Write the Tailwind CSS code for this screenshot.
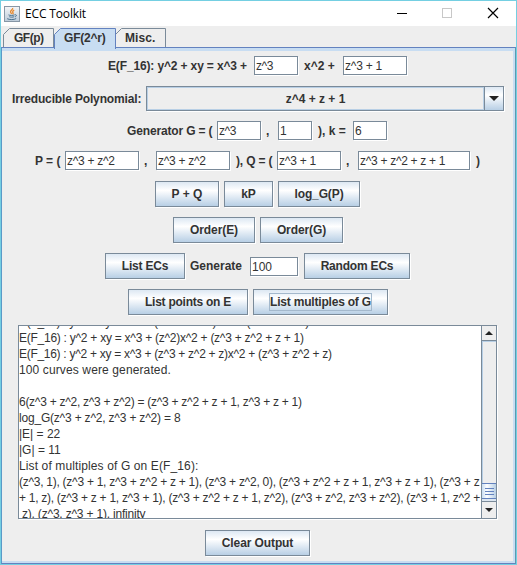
<!DOCTYPE html>
<html lang="en">
<head>
<meta charset="utf-8">
<title>ECC Toolkit</title>
<script src="https://cdn.jsdelivr.net/npm/@tailwindcss/browser@4"></script>
</head>
<body class="w-[517px] h-[565px] overflow-hidden bg-[#eeeeee] font-['Liberation_Sans',Arial,sans-serif] text-[12px] leading-[14px] text-[#333333]">
<div class="flex h-[565px] w-[517px] flex-col border border-[#74cfe2] whitespace-nowrap">
  <!-- Title bar -->
  <header class="flex h-[25px] shrink-0 items-center bg-white pl-[3px]">
    <svg class="h-4 w-4 shrink-0" viewBox="0 0 16 16" fill="none">
      <defs><linearGradient id="ic" x1="0" y1="0" x2="0" y2="1"><stop stop-color="#f4f6f8"/><stop offset="1" stop-color="#bccbd9"/></linearGradient></defs>
      <rect x=".5" y=".5" width="15" height="15" fill="url(#ic)" stroke="#8797a6"/>
      <path d="M8.6 2c.8 1.6-2.9 2.5-2 4.300.3.6.8 1 1 1.700M10.200 4.200c-1.700.8-1.900 1.500-1.200 2.600.3.5.1 1-.4 1.300" stroke="#e8892c" stroke-width="1.300"/>
      <path d="M4.500 8.900c1 .7 4.800.7 6 0M5.300 10.700c1.200.6 3.600.6 4.900 0M3.200 12.700c2 1.200 7.200 1.200 9-.2M10.800 8.800c2-.5 2.300 1.300.2 2" stroke="#4a728f" stroke-width="1"/>
    </svg>
    <h1 class="ml-[5px] w-[360px] font-['Open_Sans',sans-serif] text-[12px] tracking-[-0.15px] text-black">ECC Toolkit</h1>
    <svg class="ml-[11px] h-[25px] w-[112px] shrink-0" viewBox="0 0 112 25" fill="none" shape-rendering="crispEdges">
      <path d="M1 12.500h10" stroke="#000"/>
      <rect x="46.500" y="7.500" width="9" height="9" stroke="#c8c8c8"/>
      <path d="M92 7l10 10M102 7l-10 10" stroke="#000" stroke-width="1.200" shape-rendering="auto"/>
    </svg>
  </header>

  <!-- Tabs -->
  <nav class="flex h-[21px] shrink-0 items-end pl-[2px] font-bold">
    <div class="relative h-[19px] w-[51px] pl-[11px] pt-[3px]">
      <svg class="absolute top-0 left-0 h-[19px] w-[51px]" viewBox="0 0 51 19" fill="none"><path d="M.5 19V6.500L6.500.5H50.500V19" stroke="#7a8a99"/></svg><span class="relative tracking-[-0.5px]">GF(p)</span>
    </div>
    <div class="relative z-10 -mb-[2px] h-[21px] w-[61px] pl-[10px] pt-[3px]">
      <svg class="absolute top-0 left-0 h-[21px] w-[62px]" viewBox="0 0 62 21"><path d="M.5 21V6.500L6.500.5H61.500V21" fill="#c8ddf2" stroke="#6382bf"/></svg><span class="relative tracking-[-0.2px]">GF(2^r)</span>
    </div>
    <div class="relative h-[19px] w-[51px] pl-[10px] pt-[3px]">
      <svg class="absolute top-0 left-0 h-[19px] w-[51px]" viewBox="0 0 51 19" fill="none"><path d="M.5 19V6.500L6.500.5H50.500V19" stroke="#7a8a99"/></svg><span class="relative tracking-[0.1px]">Misc.</span>
    </div>
  </nav>

  <main class="flex h-[517px] flex-col border border-[#6382bf] border-l-[#5a9ac8] border-r-[#5a9ab0]">
   <div class="flex h-[515px] flex-col border-t-[3px] border-r-2 border-b-2 border-[#c8ddf2]">
    <div class="mt-[5px] flex h-[19px] shrink-0 items-center pl-[106px] font-bold">
      <span class="w-[146px] tracking-[-0.14px]">E(F_16): y^2 + xy = x^3 +</span>
      <span class="h-[19px] w-[44px] border border-[#7a8a99] bg-white pt-[2px] pl-px font-normal tracking-[-0.5px] shadow-[1px_1px_0_#fff]">z^3</span>
      <span class="ml-[6px] w-[39px]">x^2 +</span>
      <span class="h-[19px] w-[64px] border border-[#7a8a99] bg-white pt-[2px] pl-px font-normal tracking-[-0.25px] shadow-[1px_1px_0_#fff]">z^3 + 1</span>
    </div>

    <div class="mt-[11px] flex h-[25px] shrink-0 items-center pl-[10px] font-bold">
      <span class="w-[134px] tracking-[-0.15px]">Irreducible Polynomial:</span>
      <div class="flex h-[25px] w-[358px] border border-[#7a8a99] shadow-[1px_1px_0_#fff]">
        <span class="w-[337px] border border-[#b8cfe5] pt-[4px] text-center">z^4 + z + 1</span>
        <span class="flex w-[19px] items-center justify-center border-l border-[#7a8a99] bg-linear-to-b from-[#dde8f3] via-white via-35% to-[#b8cfe5]"><svg class="h-[5px] w-[10px]" viewBox="0 0 10 5"><path d="M0 0h10L5 5z" fill="#222"/></svg></span>
      </div>
    </div>

    <div class="mt-[10px] flex h-[19px] shrink-0 items-center pl-[125px] font-bold">
      <span class="w-[90px] tracking-[-0.15px]">Generator G = (</span>
      <span class="h-[19px] w-[44px] border border-[#7a8a99] bg-white pt-[2px] pl-px font-normal tracking-[-0.5px] shadow-[1px_1px_0_#fff]">z^3</span>
      <span class="ml-[5px] w-[12px]">,</span>
      <span class="h-[19px] w-[34px] border border-[#7a8a99] bg-white pt-[2px] pl-px font-normal shadow-[1px_1px_0_#fff]">1</span>
      <span class="ml-[6px] w-[35px]">), k =</span>
      <span class="h-[19px] w-[34px] border border-[#7a8a99] bg-white pt-[2px] pl-px font-normal shadow-[1px_1px_0_#fff]">6</span>
    </div>

    <div class="mt-[11px] flex h-[19px] shrink-0 items-center pl-[33px] font-bold">
      <span class="w-[30px]">P = (</span>
      <span class="h-[19px] w-[74px] border border-[#7a8a99] bg-white pt-[2px] pl-px font-normal tracking-[-0.3px] shadow-[1px_1px_0_#fff]">z^3 + z^2</span>
      <span class="ml-[5px] w-[12px]">,</span>
      <span class="h-[19px] w-[74px] border border-[#7a8a99] bg-white pt-[2px] pl-px font-normal tracking-[-0.3px] shadow-[1px_1px_0_#fff]">z^3 + z^2</span>
      <span class="ml-[6px] w-[41px] tracking-[-0.15px]">), Q = (</span>
      <span class="h-[19px] w-[64px] border border-[#7a8a99] bg-white pt-[2px] pl-px font-normal tracking-[-0.25px] shadow-[1px_1px_0_#fff]">z^3 + 1</span>
      <span class="ml-[5px] w-[12px]">,</span>
      <span class="h-[19px] w-[112px] border border-[#7a8a99] bg-white pt-[2px] pl-px font-normal tracking-[-0.3px] shadow-[1px_1px_0_#fff]">z^3 + z^2 + z + 1</span>
      <span class="ml-[6px]">)</span>
    </div>

    <div class="mt-[11px] flex h-[26px] shrink-0 gap-[5px] pl-[153px] font-bold">
      <button class="w-[64px] border border-[#7a8a99] bg-linear-to-b from-[#dde8f3] via-white via-35% to-[#b8cfe5] shadow-[1px_1px_0_#fff]">P + Q</button>
      <button class="w-[49px] border border-[#7a8a99] bg-linear-to-b from-[#dde8f3] via-white via-35% to-[#b8cfe5] shadow-[1px_1px_0_#fff]">kP</button>
      <button class="w-[82px] border border-[#7a8a99] bg-linear-to-b from-[#dde8f3] via-white via-35% to-[#b8cfe5] tracking-[-0.12px] shadow-[1px_1px_0_#fff]">log_G(P)</button>
    </div>

    <div class="mt-[10px] flex h-[26px] shrink-0 gap-[5px] pl-[171px] font-bold">
      <button class="w-[82px] border border-[#7a8a99] bg-linear-to-b from-[#dde8f3] via-white via-35% to-[#b8cfe5] tracking-[-0.1px] shadow-[1px_1px_0_#fff]">Order(E)</button>
      <button class="w-[83px] border border-[#7a8a99] bg-linear-to-b from-[#dde8f3] via-white via-35% to-[#b8cfe5] tracking-[-0.1px] shadow-[1px_1px_0_#fff]">Order(G)</button>
    </div>

    <div class="mt-[10px] flex h-[26px] shrink-0 items-center pl-[103px] font-bold">
      <button class="h-[26px] w-[80px] border border-[#7a8a99] bg-linear-to-b from-[#dde8f3] via-white via-35% to-[#b8cfe5] tracking-[-0.2px] shadow-[1px_1px_0_#fff]">List ECs</button>
      <span class="ml-[5px] w-[60px]">Generate</span>
      <span class="h-[19px] w-[48px] border border-[#7a8a99] bg-white pt-[2px] pl-px font-normal shadow-[1px_1px_0_#fff]">100</span>
      <button class="ml-[6px] h-[26px] w-[106px] border border-[#7a8a99] bg-linear-to-b from-[#dde8f3] via-white via-35% to-[#b8cfe5] tracking-[-0.2px] shadow-[1px_1px_0_#fff]">Random ECs</button>
    </div>

    <div class="mt-[10px] flex h-[26px] shrink-0 gap-[5px] pl-[126px] font-bold">
      <button class="w-[120px] border border-[#7a8a99] bg-linear-to-b from-[#dde8f3] via-white via-35% to-[#b8cfe5] tracking-[-0.25px] shadow-[1px_1px_0_#fff]">List points on E</button>
      <button class="flex w-[135px] items-center justify-center border border-[#7a8a99] bg-linear-to-b from-[#dde8f3] via-white via-35% to-[#b8cfe5] tracking-[-0.2px] shadow-[1px_1px_0_#fff]"><span class="flex h-[18px] w-[103px] items-center justify-center border border-[#a3b8cc]">List multiples of G</span></button>
    </div>

    <!-- Output -->
    <div class="mt-[10px] ml-[16px] flex h-[194px] w-[479px] shrink-0 border border-[#7a8a99] bg-white shadow-[1px_1px_0_#fff]">
      <div class="h-[192px] w-[462px] overflow-hidden leading-[16px]">
        <div class="-mt-[12px]">
          <p class="h-4 tracking-[-0.3px]">E(F_16) : y^2 + xy = x^3 + (z^3 + z + 1)x^2 + (z^3 + z + 1)</p>
          <p class="h-4 tracking-[-0.26px]">E(F_16) : y^2 + xy = x^3 + (z^2)x^2 + (z^3 + z^2 + z + 1)</p>
          <p class="h-4 tracking-[-0.29px]">E(F_16) : y^2 + xy = x^3 + (z^3 + z^2 + z)x^2 + (z^3 + z^2 + z)</p>
          <p class="h-4 tracking-[0.12px]">100 curves were generated.</p>
          <p class="h-4"></p>
          <p class="h-4 tracking-[-0.28px]">6(z^3 + z^2, z^3 + z^2) = (z^3 + z^2 + z + 1, z^3 + z + 1)</p>
          <p class="h-4 tracking-[-0.2px]">log_G(z^3 + z^2, z^3 + z^2) = 8</p>
          <p class="h-4">|E| = 22</p>
          <p class="h-4">|G| = 11</p>
          <p class="h-4 tracking-[0.12px]">List of multiples of G on E(F_16):</p>
          <p class="h-4 tracking-[-0.27px]">(z^3, 1), (z^3 + 1, z^3 + z^2 + z + 1), (z^3 + z^2, 0), (z^3 + z^2 + z + 1, z^3 + z + 1), (z^3 + z</p>
          <p class="h-4 tracking-[-0.28px]">+ 1, z), (z^3 + z + 1, z^3 + 1), (z^3 + z^2 + z + 1, z^2), (z^3 + z^2, z^3 + z^2), (z^3 + 1, z^2 +</p>
          <p class="h-4 pl-[3px] tracking-[-0.2px]">z), (z^3, z^3 + 1), infinity</p>
        </div>
      </div>
      <div class="flex w-[15px] flex-col border-l border-[#7a8a99] bg-[#eeeeee]">
        <div class="flex h-[15px] items-center justify-center border-b border-[#7a8a99]"><svg class="h-[4px] w-[8px]" viewBox="0 0 8 4"><path d="M0 4h8L4 0z" fill="#222"/></svg></div>
        <div class="h-[142px] border-t border-l border-[#b8cfe5]"></div>
        <div class="flex h-[16px] flex-col items-center justify-center gap-px border-y border-[#6382bf] bg-linear-to-r from-[#c8ddf2] via-white via-35% to-[#b8cfe5]">
          <i class="h-px w-[9px] bg-[#6382bf]"></i><i class="mt-px h-px w-[9px] bg-[#6382bf]"></i><i class="mt-px h-px w-[9px] bg-[#6382bf]"></i>
        </div>
        <div class="h-[3px] border-b border-[#7a8a99] bg-[#dce6f0]"></div>
        <div class="flex h-[16px] items-center justify-center"><svg class="h-[4px] w-[8px]" viewBox="0 0 8 4"><path d="M0 0h8L4 4z" fill="#222"/></svg></div>
      </div>
    </div>

    <button class="mt-[11px] ml-[203px] h-[26px] w-[105px] shrink-0 border border-[#7a8a99] bg-linear-to-b from-[#dde8f3] via-white via-35% to-[#b8cfe5] font-bold tracking-[-0.1px] shadow-[1px_1px_0_#fff]">Clear Output</button>
   </div>
  </main>
</div>
</body>
</html>
